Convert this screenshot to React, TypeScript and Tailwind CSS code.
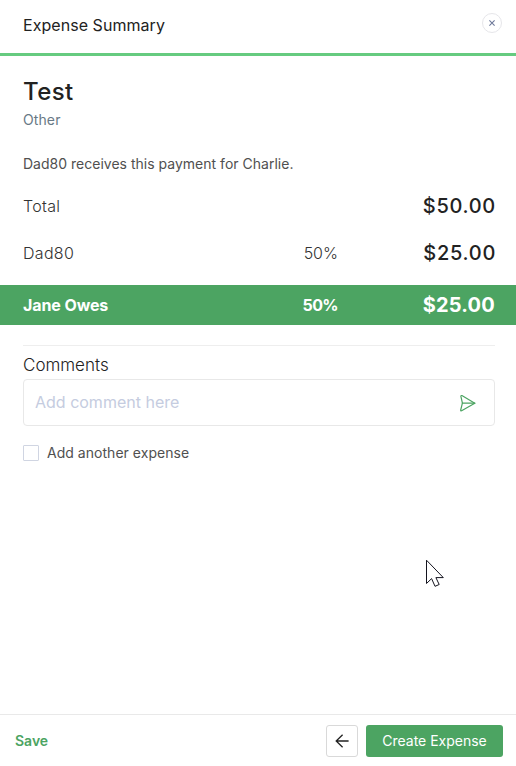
import { useState } from "react";

interface Share {
  name: string;
  percent?: string;
  amount: string;
}

const shares: Share[] = [
  { name: "Total", amount: "$50.00" },
  { name: "Dad80", percent: "50%", amount: "$25.00" },
];

function SendIcon() {
  return (
    <svg width="18" height="18" viewBox="0 0 18 18" fill="none" stroke="#4ca462" strokeWidth="1.2" strokeLinejoin="round" strokeLinecap="round">
      <path d="M2.9 1.6 L15.8 9.2 L2.6 16.8 Q1.4 17.2 1.7 16 L3.4 9.2 L1.9 2.4 Q1.8 1.2 2.9 1.6 Z" />
      <path d="M3.4 9.2 H15.8" />
    </svg>
  );
}

function Cursor() {
  return (
    <svg className="absolute left-[426px] top-[559px]" width="20" height="29" viewBox="0 0 20 29" fill="#fff" stroke="#14141f" strokeWidth="1">
      <path d="M0.5 1.2 V24.5 L5.6 19.6 L9 27.3 L13.2 25.5 L9.9 18.6 H17.3 Z" />
    </svg>
  );
}

export default function ExpenseSummary() {
  const [comment, setComment] = useState("");
  const [another, setAnother] = useState(false);

  return (
    <div className="relative flex flex-col w-[516px] h-[766px] overflow-hidden bg-white font-['Inter',sans-serif] text-[#444]">
      <header className="flex shrink-0 justify-between h-14 border-b-3 border-[#66cb80] pl-[23px] pr-[14px]">
        <h1 className="mt-[13px] text-base leading-6 tracking-[0.05px] text-[#222]">Expense Summary</h1>
        <button className="flex items-center justify-center mt-[13px] size-5 rounded-full border border-[#e6e6ea]">
          <svg width="6" height="6" viewBox="0 0 6 6" stroke="#6d7899" strokeWidth="1.1">
            <path d="M0.4 0.4 L5.6 5.6 M5.6 0.4 L0.4 5.6" />
          </svg>
        </button>
      </header>

      <main className="flex flex-col grow">
        <div className="px-[23px] pt-5">
          <h2 className="text-2xl leading-8 font-medium tracking-[0.4px] text-[#222]">Test</h2>
          <p className="mt-0.5 text-sm leading-5 tracking-[0.1px] text-[#687985]">Other</p>
          <p className="mt-6 text-sm leading-5 tracking-[0.01px] text-[#505050]">Dad80 receives this payment for Charlie.</p>
        </div>

        <div className="flex flex-col mt-2">
          {shares.map((share) => (
            <div key={share.name} className="flex items-center h-[47px] pl-[23px] pr-[20px]">
              <span className="w-[214px] text-base font-light tracking-[0.3px] text-[#333]">{share.name}</span>
              <span className="w-[101px] text-right text-base font-light text-[#333]">{share.percent}</span>
              <span className="grow text-right text-xl font-medium tracking-[0.7px] text-[#222]">{share.amount}</span>
            </div>
          ))}
        </div>
        <div className="flex items-center mt-[9px] h-10 pl-[23px] pr-[21px] bg-[#4ca462] text-white">
          <span className="w-[214px] text-base font-bold tracking-[-0.1px]">Jane Owes</span>
          <span className="w-[101px] text-right text-base font-bold tracking-[-0.6px]">50%</span>
          <span className="grow text-right text-xl font-bold tracking-[0.2px]">$25.00</span>
        </div>

        <div className="flex flex-col ml-[23px] mr-[21px] mt-5 border-t border-[#eee]">
          <label className="mt-[7px] text-[17px] leading-6 font-light text-[#222]">Comments</label>
          <div className="flex items-center mt-0.5 h-[47px] rounded border border-[#e8e8e8] pl-[11px] pr-[17px]">
            <input
              type="text"
              value={comment}
              onChange={(event) => setComment(event.currentTarget.value)}
              placeholder="Add comment here"
              className="grow pb-0.5 text-base outline-none placeholder:text-[#c5cce0]"
            />
            <button>
              <SendIcon />
            </button>
          </div>
          <label className="flex items-center mt-[17px] h-5">
            <input
              type="checkbox"
              checked={another}
              onChange={() => setAnother(!another)}
              className="appearance-none size-4 rounded-[1px] border border-[#d0d5e2] checked:bg-[#4ca462]"
            />
            <span className="ml-2 text-sm tracking-[0.03px] text-[#505050]">Add another expense</span>
          </label>
        </div>
      </main>

      <footer className="flex shrink-0 items-center h-[52px] border-t border-[#e9e9e9] pl-[15px] pr-[13px]">
        <button className="text-sm font-semibold text-[#4ca462]">Save</button>
        <button className="flex items-center justify-center ml-auto size-8 rounded-[3px] border border-[#d9d9d9]">
          <svg width="14" height="14" viewBox="0 0 14 14" fill="none" stroke="#222" strokeWidth="1.3">
            <path d="M7.6 0.8 L1.2 7 L7.6 13.2 M1.2 7 H13.6" />
          </svg>
        </button>
        <button className="ml-2 w-[137px] h-8 rounded-[3px] bg-[#4ca462] text-sm text-white">Create Expense</button>
      </footer>

      <Cursor />
    </div>
  );
}
